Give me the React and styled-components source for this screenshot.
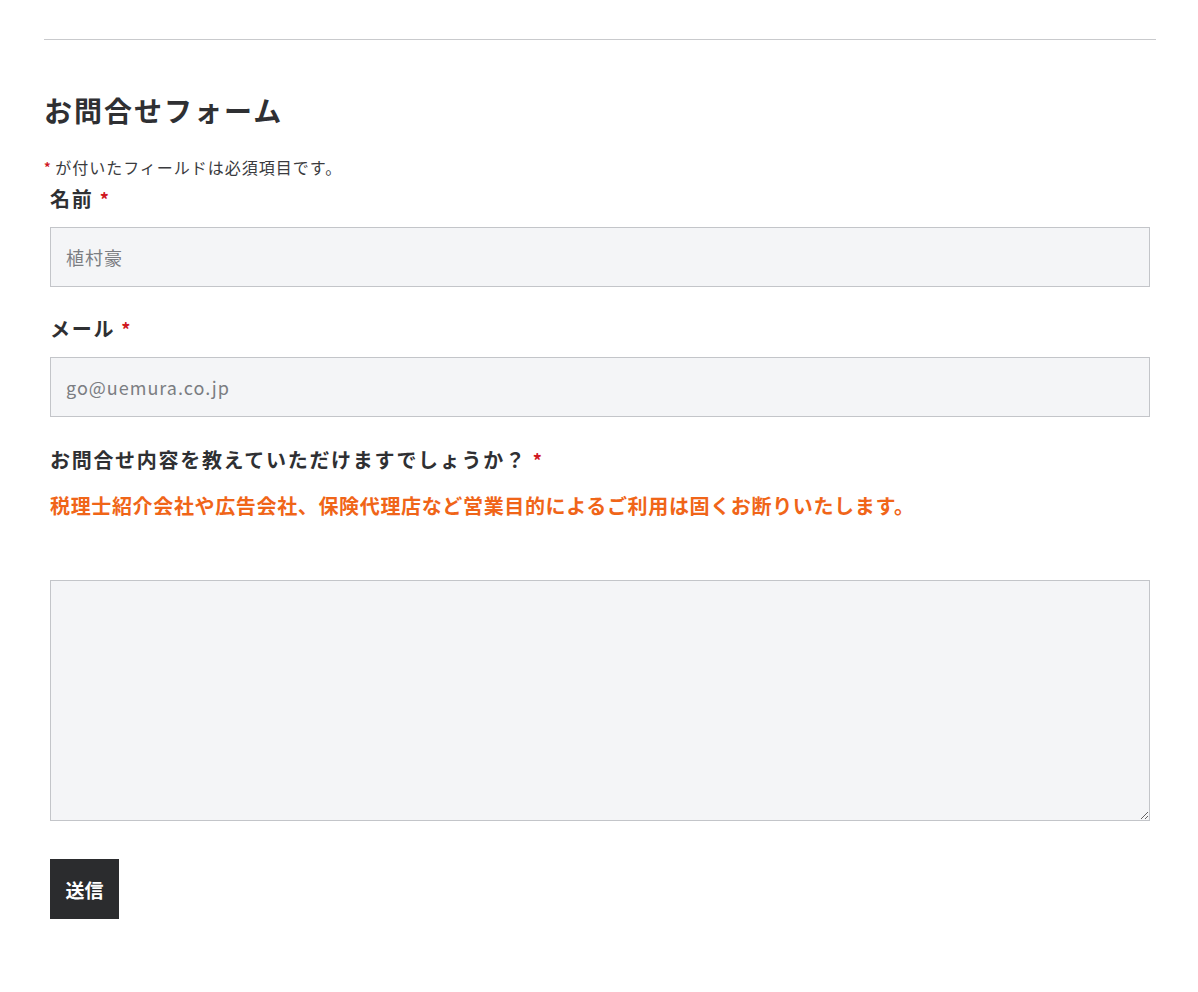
import React from 'react'
import styled, { createGlobalStyle } from 'styled-components'

const GlobalStyle = createGlobalStyle`
  body {
    margin: 0;
    background: #fff;
    font-family: "Noto Sans CJK JP", "Noto Sans", sans-serif;
    color: #2f3033;
  }
`

export default function App() {
  return (
    <>
      <GlobalStyle />
      <Page>
        <Rule />
        <Title>お問合せフォーム</Title>
        <Note>
          <Star $small>*</Star> が付いたフィールドは必須項目です。
        </Note>
        <Form onSubmit={(e) => e.preventDefault()}>
          <Field>
            <Label>名前 <Star>*</Star></Label>
            <Input type='text' placeholder='植村豪' />
          </Field>
          <Field $top={28}>
            <Label>メール <Star>*</Star></Label>
            <Input type='email' placeholder='go@uemura.co.jp' />
          </Field>
          <Field $top={29}>
            <Label>お問合せ内容を教えていただけますでしょうか？ <Star>*</Star></Label>
            <Warning>税理士紹介会社や広告会社、保険代理店など営業目的によるご利用は固くお断りいたします。</Warning>
            <TextArea />
          </Field>
          <Submit type='submit'>送信</Submit>
        </Form>
      </Page>
    </>
  )
}

const Page = styled.div`
  padding: 39px 42px 60px 44px;
`

const Rule = styled.hr`
  margin: 0;
  border: 0;
  height: 1px;
  background: #c9cacd;
`

const Title = styled.h2`
  margin: 50px 0 0;
  font-size: 28px;
  line-height: 40px;
  font-weight: 700;
  letter-spacing: 2px;
  color: #2f3033;
`

const Note = styled.p`
  margin: 25px 0 0;
  font-size: 16px;
  line-height: 24px;
  letter-spacing: 1px;
  color: #3a3b3e;
`

const Star = styled.span`
  color: #d0181f;
  font-size: ${(p) => (p.$small ? '13px' : '18px')};
  font-weight: 700;
  letter-spacing: 0;
  vertical-align: ${(p) => (p.$small ? '2px' : '0')};
`

const Form = styled.form`
  display: flex;
  flex-direction: column;
  align-items: flex-start;
  padding: 0 6px;
  margin-top: 6px;
`

const Field = styled.div`
  display: flex;
  flex-direction: column;
  width: 100%;
  margin-top: ${(p) => p.$top || 0}px;
`

const Label = styled.label`
  font-size: 20px;
  line-height: 28px;
  font-weight: 700;
  letter-spacing: 1.7px;
  color: #2f3033;
  margin-bottom: 14px;
`

const Input = styled.input`
  box-sizing: border-box;
  width: 100%;
  height: 60px;
  padding: 0 15px;
  border: 1px solid #c3c5c9;
  background: #f4f5f7;
  font-family: "Noto Sans CJK JP", "Noto Sans", sans-serif;
  font-size: 18px;
  letter-spacing: 1px;
  color: #2f3033;
  outline: none;
  &::placeholder {
    color: #7b7d82;
  }
`

const Warning = styled.p`
  margin: 3px 0 0;
  font-size: 20px;
  line-height: 30px;
  font-weight: 700;
  letter-spacing: 0.65px;
  color: #f06518;
`

const TextArea = styled.textarea`
  box-sizing: border-box;
  width: 100%;
  height: 241px;
  margin-top: 59px;
  padding: 15px;
  border: 1px solid #c3c5c9;
  background: #f4f5f7;
  font-family: "Noto Sans CJK JP", "Noto Sans", sans-serif;
  font-size: 18px;
  outline: none;
  display: block;
`

const Submit = styled.button`
  margin-top: 38px;
  width: 69px;
  height: 60px;
  border: 0;
  background: #2b2c2e;
  color: #fff;
  font-family: "Noto Sans CJK JP", "Noto Sans", sans-serif;
  font-size: 19px;
  font-weight: 700;
  cursor: pointer;
`
